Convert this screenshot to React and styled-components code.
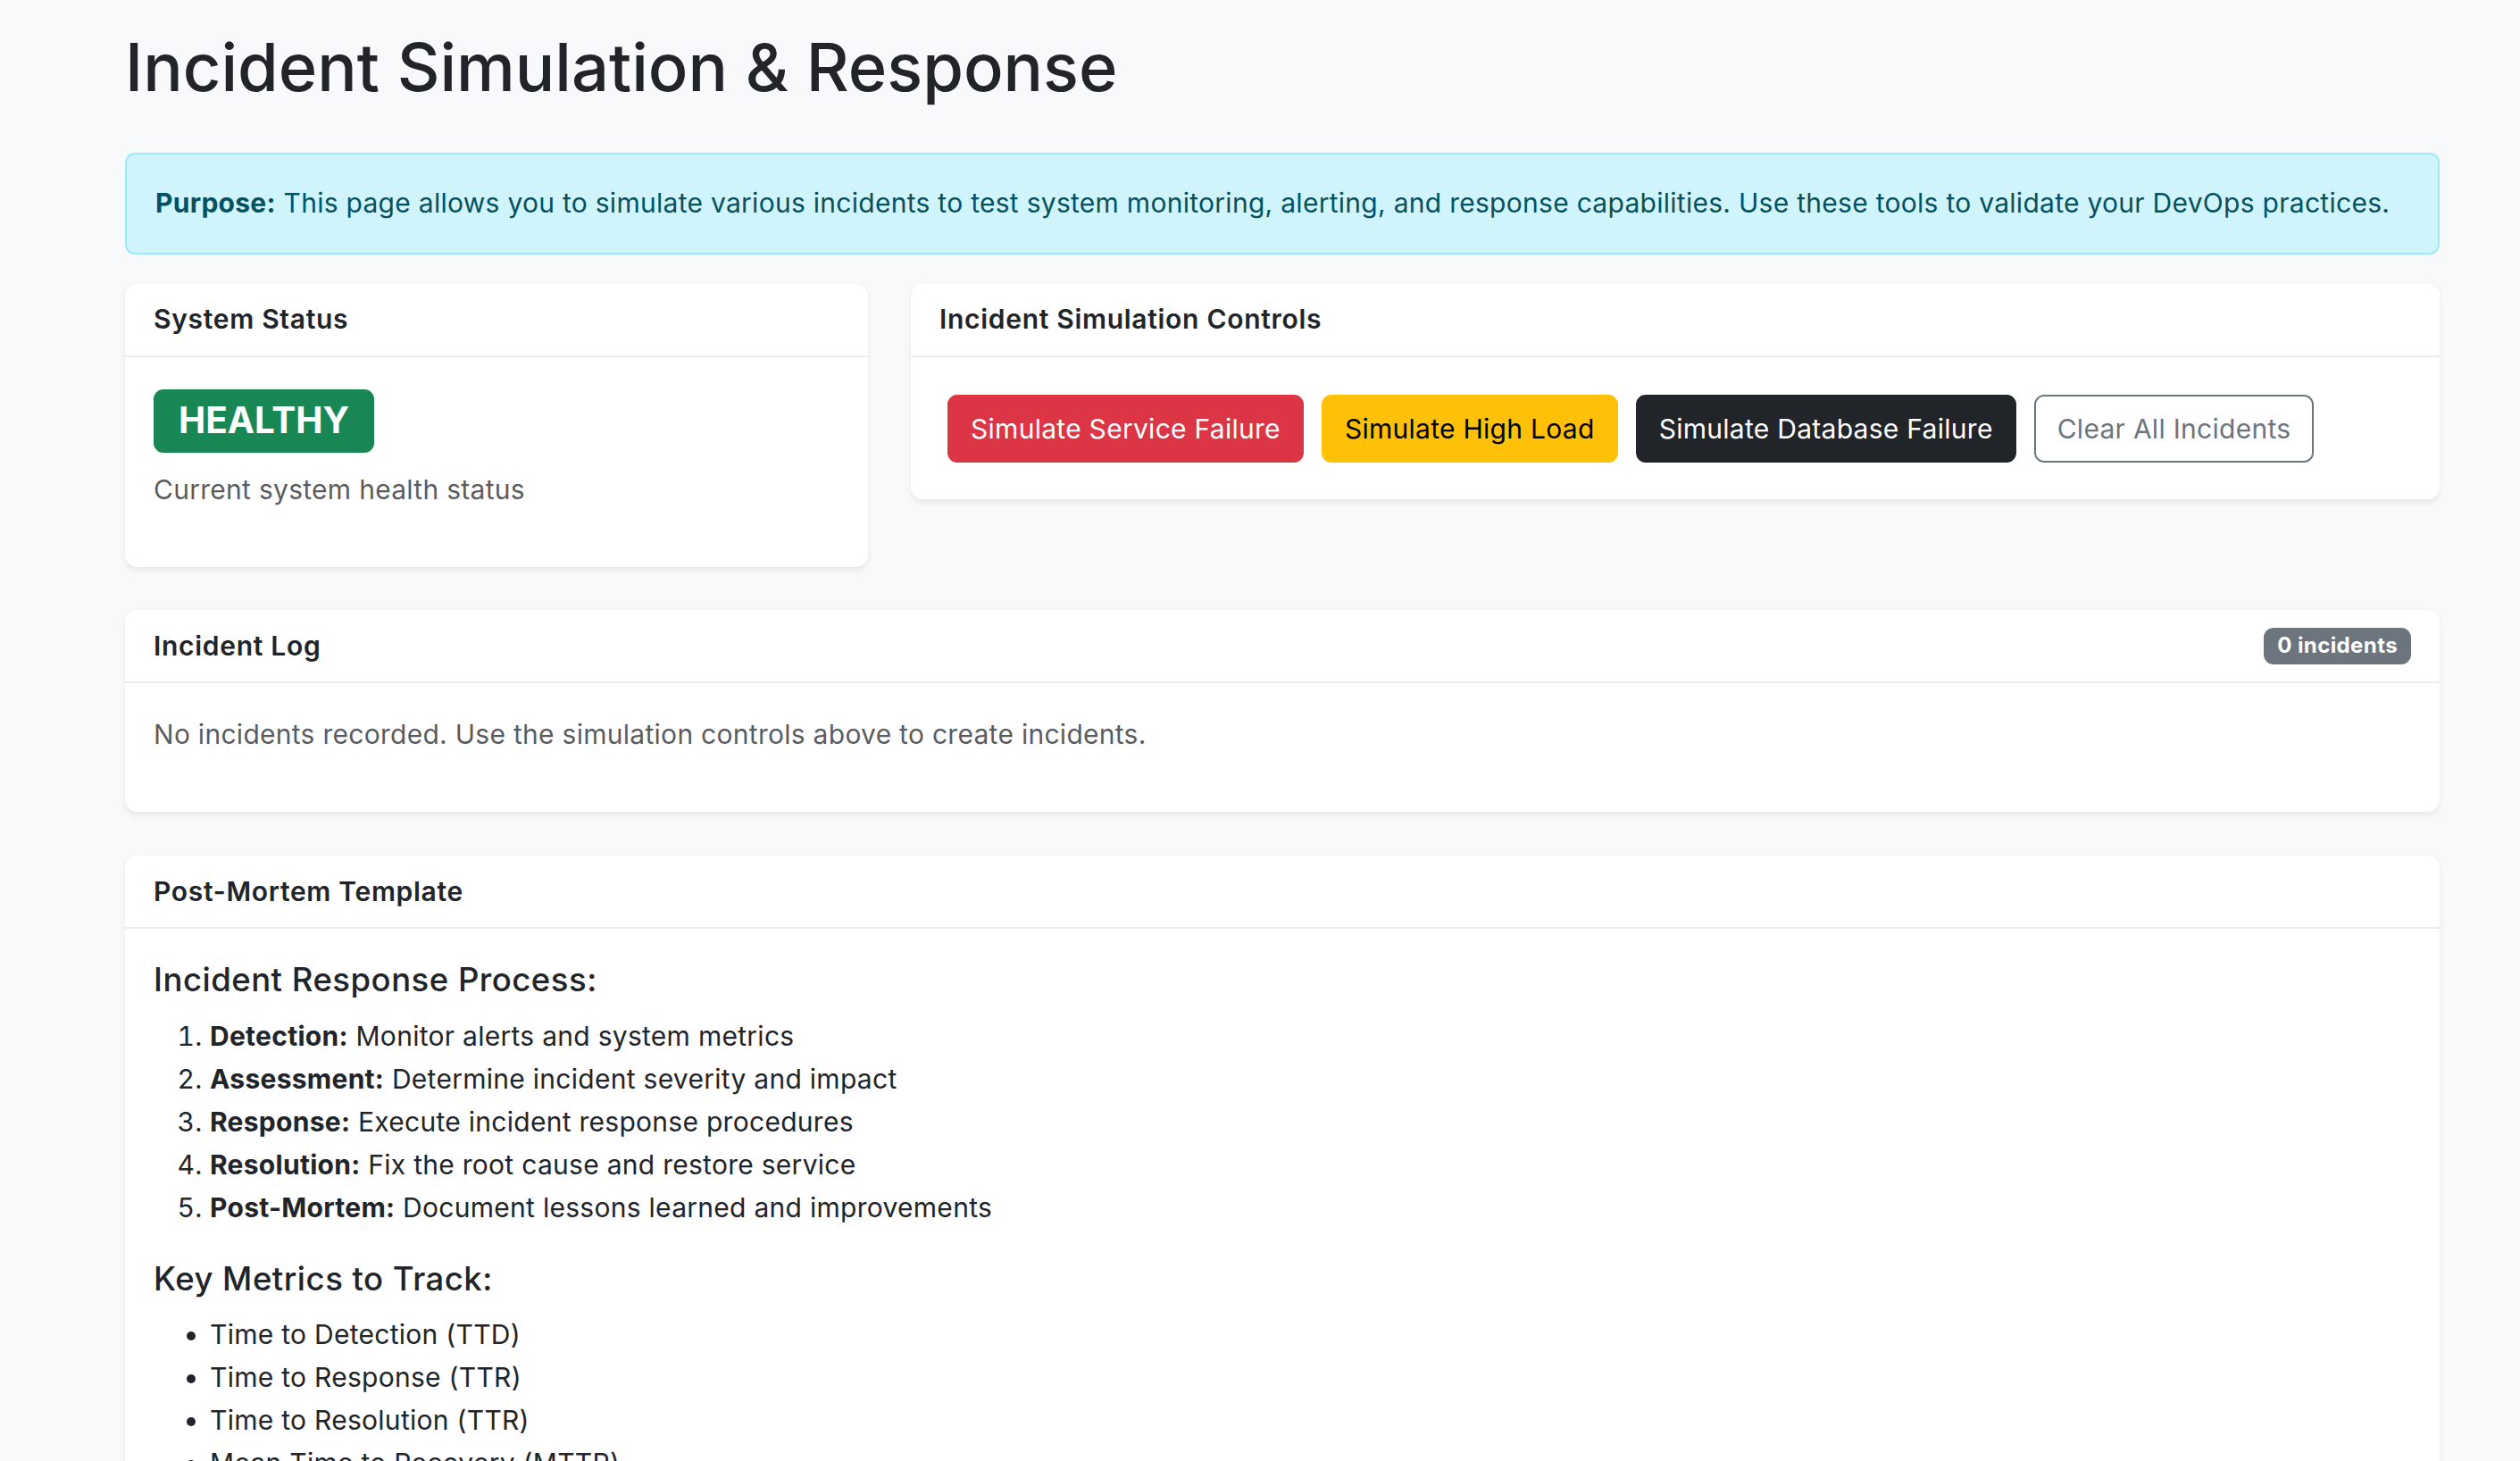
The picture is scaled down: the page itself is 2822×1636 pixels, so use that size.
import React from "react";
import styled, { createGlobalStyle } from "styled-components";

const GlobalStyle = createGlobalStyle`
  * {
    box-sizing: border-box;
  }
  body {
    margin: 0;
    background: #f8f9fa;
    color: #212529;
    font-family: Inter, "Noto Sans", sans-serif;
    font-size: 30px;
    letter-spacing: 0.28px;
    line-height: 43.2px;
  }
`;

const Page = styled.main`
  padding: 31px 90px 60px 140px;
`;

const Title = styled.h1`
  margin: 0 0 51px;
  font-size: 74px;
  font-weight: 500;
  letter-spacing: 0;
  line-height: 1.2;
`;

const Alert = styled.div`
  margin-bottom: 33px;
  padding: 33.5px 32px;
  background: #cff4fc;
  border: 2px solid #9eeaf9;
  border-radius: 11px;
  color: #055160;

  strong {
    font-weight: 700;
  }
`;

const Row = styled.div`
  display: grid;
  grid-template-columns: 832px 1fr;
  gap: 48px;
  align-items: start;
  margin-bottom: 48px;
`;

const Card = styled.section`
  background: #fff;
  border-radius: 14px;
  box-shadow: 0 3.6px 7.2px rgba(0, 0, 0, 0.075);
  margin-bottom: ${(p) => (p.$last ? "0" : "49px")};
  overflow: hidden;
`;

const CardHeader = styled.header`
  display: flex;
  align-items: center;
  justify-content: space-between;
  height: 82px;
  padding: 0 32px;
  border-bottom: 2px solid #e9ecef;
`;

const CardTitle = styled.h2`
  margin: 0;
  font-size: 30px;
  font-weight: 600;
  letter-spacing: 0.7px;
  line-height: 43.2px;
`;

const CardBody = styled.div`
  padding: ${(p) => p.$pad || "36px 32px"};
`;

const StatusBadge = styled.span`
  display: block;
  width: fit-content;
  margin-bottom: 20px;
  padding: 15.25px 28px;
  background: #198754;
  color: #fff;
  border-radius: 11px;
  font-size: 40.5px;
  font-weight: 700;
  letter-spacing: 0;
  line-height: 1;
`;

const Muted = styled.p`
  margin: 0 0 29px;
  color: rgba(33, 37, 41, 0.75);
`;

const CountBadge = styled.span`
  padding: 8.5px 15px;
  background: #6c757d;
  color: #fff;
  border-radius: 11px;
  font-size: 24px;
  font-weight: 700;
  letter-spacing: 0.4px;
  line-height: 1;
`;

const ButtonRow = styled.div`
  display: flex;
  gap: 20px;
  padding-left: 9px;
`;

const variants = {
  danger: { bg: "#dc3545", border: "#dc3545", color: "#fff" },
  warning: { bg: "#ffc107", border: "#ffc107", color: "#000" },
  dark: { bg: "#212529", border: "#212529", color: "#fff" },
  outline: { bg: "transparent", border: "#6c757d", color: "#6c757d" },
};

const Button = styled.button`
  padding: 14.5px 24px;
  font-family: inherit;
  font-size: 30px;
  letter-spacing: 0.28px;
  line-height: 43.2px;
  border-radius: 11px;
  border: 2px solid ${(p) => variants[p.$variant].border};
  background: ${(p) => variants[p.$variant].bg};
  color: ${(p) => variants[p.$variant].color};
  cursor: pointer;
`;

const SectionHeading = styled.h3`
  margin: 0 0 16px;
  font-size: 36.5px;
  font-weight: 500;
  letter-spacing: 0.5px;
  line-height: 43.2px;
`;

const List = styled.ol`
  margin: 0 0 35px;
  padding-left: 63px;

  li {
    line-height: 48px;
  }
  strong {
    font-weight: 700;
  }
`;

const BulletList = styled(List).attrs({ as: "ul" })``;

const steps = [
  ["Detection:", "Monitor alerts and system metrics"],
  ["Assessment:", "Determine incident severity and impact"],
  ["Response:", "Execute incident response procedures"],
  ["Resolution:", "Fix the root cause and restore service"],
  ["Post-Mortem:", "Document lessons learned and improvements"],
];

const metrics = [
  "Time to Detection (TTD)",
  "Time to Response (TTR)",
  "Time to Resolution (TTR)",
  "Mean Time to Recovery (MTTR)",
];

const App = () => {
  const incidents = [];

  return (
    <>
      <GlobalStyle />
      <Page>
        <Title>Incident Simulation &amp; Response</Title>

        <Alert>
          <strong>Purpose:</strong> This page allows you to simulate various
          incidents to test system monitoring, alerting, and response
          capabilities. Use these tools to validate your DevOps practices.
        </Alert>

        <Row>
          <Card $last>
            <CardHeader>
              <CardTitle>System Status</CardTitle>
            </CardHeader>
            <CardBody>
              <StatusBadge>HEALTHY</StatusBadge>
              <Muted>Current system health status</Muted>
            </CardBody>
          </Card>

          <Card $last>
            <CardHeader>
              <CardTitle>Incident Simulation Controls</CardTitle>
            </CardHeader>
            <CardBody $pad="42px 32px 41px">
              <ButtonRow>
                <Button $variant="danger">Simulate Service Failure</Button>
                <Button $variant="warning">Simulate High Load</Button>
                <Button $variant="dark">Simulate Database Failure</Button>
                <Button $variant="outline">Clear All Incidents</Button>
              </ButtonRow>
            </CardBody>
          </Card>
        </Row>

        <Card>
          <CardHeader>
            <CardTitle>Incident Log</CardTitle>
            <CountBadge>{incidents.length} incidents</CountBadge>
          </CardHeader>
          <CardBody>
            <Muted>
              No incidents recorded. Use the simulation controls above to
              create incidents.
            </Muted>
          </CardBody>
        </Card>

        <Card>
          <CardHeader>
            <CardTitle>Post-Mortem Template</CardTitle>
          </CardHeader>
          <CardBody>
            <SectionHeading>Incident Response Process:</SectionHeading>
            <List>
              {steps.map(([label, text]) => (
                <li key={label}>
                  <strong>{label}</strong> {text}
                </li>
              ))}
            </List>
            <SectionHeading>Key Metrics to Track:</SectionHeading>
            <BulletList>
              {metrics.map((m) => (
                <li key={m}>{m}</li>
              ))}
            </BulletList>
          </CardBody>
        </Card>
      </Page>
    </>
  );
};

export default App;
